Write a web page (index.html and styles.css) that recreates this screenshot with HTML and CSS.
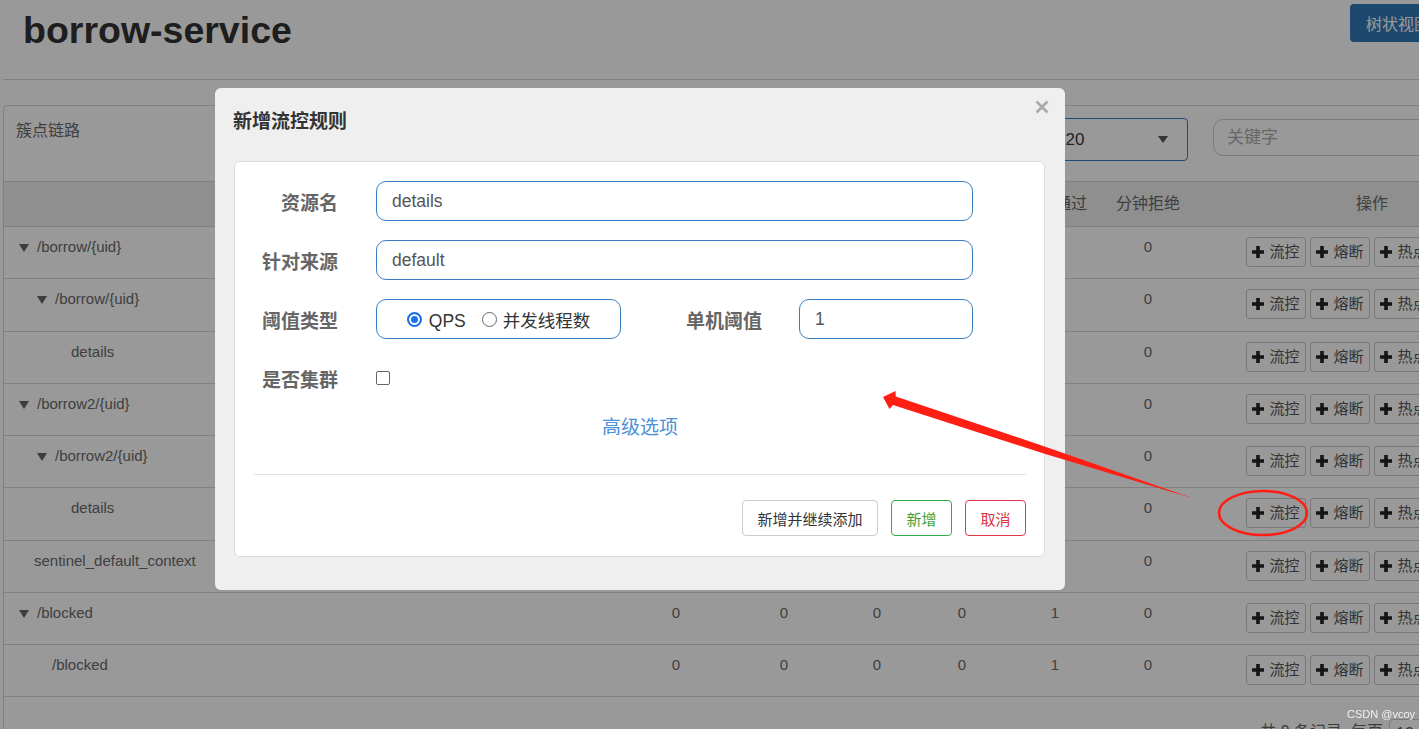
FILE: index.html
```html
<!DOCTYPE html>
<html lang="zh">
<head>
<meta charset="utf-8">
<title>borrow-service</title>
<link rel="stylesheet" href="styles.css">
</head>
<body>
<div class="page">
  <header class="page-head">
    <h1 class="page-title">borrow-service</h1>
    <button class="btn-tree">树状视图</button>
  </header>

  <section class="panel">
    <div class="panel-head">
      <span class="panel-title">簇点链路</span>
      <div class="tools">
        <div class="select"><span>720</span><i class="caret"></i></div>
        <input class="kw" type="text" placeholder="关键字">
        <button class="refresh">刷新</button>
      </div>
    </div>

    <table class="grid">
      <colgroup>
        <col class="w-res"><col class="w-a"><col class="w-a"><col class="w-b"><col class="w-c"><col class="w-d"><col class="w-c"><col class="w-ops">
      </colgroup>
      <thead>
        <tr><th>资源名</th><th>通过QPS</th><th>拒绝QPS</th><th>并发数</th><th>平均RT</th><th>分钟通过</th><th>分钟拒绝</th><th>操作</th></tr>
      </thead>
      <tbody>
        <tr>
          <td class="res p0"><i class="tri"></i>/borrow/{uid}</td>
          <td>0</td><td>0</td><td>0</td><td>0</td><td>1</td><td>0</td>
          <td class="ops"><div class="ops-btns"><button class="op"><svg class="plus" viewBox="0 0 12 12"><path d="M4.2 0h3.6v4.2H12v3.6H7.8V12H4.2V7.8H0V4.2h4.2z"/></svg>流控</button><button class="op"><svg class="plus" viewBox="0 0 12 12"><path d="M4.2 0h3.6v4.2H12v3.6H7.8V12H4.2V7.8H0V4.2h4.2z"/></svg>熔断</button><button class="op"><svg class="plus" viewBox="0 0 12 12"><path d="M4.2 0h3.6v4.2H12v3.6H7.8V12H4.2V7.8H0V4.2h4.2z"/></svg>热点</button><button class="op"><svg class="plus" viewBox="0 0 12 12"><path d="M4.2 0h3.6v4.2H12v3.6H7.8V12H4.2V7.8H0V4.2h4.2z"/></svg>授权</button></div></td>
        </tr>
        <tr>
          <td class="res p1"><i class="tri"></i>/borrow/{uid}</td>
          <td>0</td><td>0</td><td>0</td><td>0</td><td>1</td><td>0</td>
          <td class="ops"><div class="ops-btns"><button class="op"><svg class="plus" viewBox="0 0 12 12"><path d="M4.2 0h3.6v4.2H12v3.6H7.8V12H4.2V7.8H0V4.2h4.2z"/></svg>流控</button><button class="op"><svg class="plus" viewBox="0 0 12 12"><path d="M4.2 0h3.6v4.2H12v3.6H7.8V12H4.2V7.8H0V4.2h4.2z"/></svg>熔断</button><button class="op"><svg class="plus" viewBox="0 0 12 12"><path d="M4.2 0h3.6v4.2H12v3.6H7.8V12H4.2V7.8H0V4.2h4.2z"/></svg>热点</button><button class="op"><svg class="plus" viewBox="0 0 12 12"><path d="M4.2 0h3.6v4.2H12v3.6H7.8V12H4.2V7.8H0V4.2h4.2z"/></svg>授权</button></div></td>
        </tr>
        <tr>
          <td class="res leaf2">details</td>
          <td>0</td><td>0</td><td>0</td><td>0</td><td>1</td><td>0</td>
          <td class="ops"><div class="ops-btns"><button class="op"><svg class="plus" viewBox="0 0 12 12"><path d="M4.2 0h3.6v4.2H12v3.6H7.8V12H4.2V7.8H0V4.2h4.2z"/></svg>流控</button><button class="op"><svg class="plus" viewBox="0 0 12 12"><path d="M4.2 0h3.6v4.2H12v3.6H7.8V12H4.2V7.8H0V4.2h4.2z"/></svg>熔断</button><button class="op"><svg class="plus" viewBox="0 0 12 12"><path d="M4.2 0h3.6v4.2H12v3.6H7.8V12H4.2V7.8H0V4.2h4.2z"/></svg>热点</button><button class="op"><svg class="plus" viewBox="0 0 12 12"><path d="M4.2 0h3.6v4.2H12v3.6H7.8V12H4.2V7.8H0V4.2h4.2z"/></svg>授权</button></div></td>
        </tr>
        <tr>
          <td class="res p0"><i class="tri"></i>/borrow2/{uid}</td>
          <td>0</td><td>0</td><td>0</td><td>0</td><td>1</td><td>0</td>
          <td class="ops"><div class="ops-btns"><button class="op"><svg class="plus" viewBox="0 0 12 12"><path d="M4.2 0h3.6v4.2H12v3.6H7.8V12H4.2V7.8H0V4.2h4.2z"/></svg>流控</button><button class="op"><svg class="plus" viewBox="0 0 12 12"><path d="M4.2 0h3.6v4.2H12v3.6H7.8V12H4.2V7.8H0V4.2h4.2z"/></svg>熔断</button><button class="op"><svg class="plus" viewBox="0 0 12 12"><path d="M4.2 0h3.6v4.2H12v3.6H7.8V12H4.2V7.8H0V4.2h4.2z"/></svg>热点</button><button class="op"><svg class="plus" viewBox="0 0 12 12"><path d="M4.2 0h3.6v4.2H12v3.6H7.8V12H4.2V7.8H0V4.2h4.2z"/></svg>授权</button></div></td>
        </tr>
        <tr>
          <td class="res p1"><i class="tri"></i>/borrow2/{uid}</td>
          <td>0</td><td>0</td><td>0</td><td>0</td><td>1</td><td>0</td>
          <td class="ops"><div class="ops-btns"><button class="op"><svg class="plus" viewBox="0 0 12 12"><path d="M4.2 0h3.6v4.2H12v3.6H7.8V12H4.2V7.8H0V4.2h4.2z"/></svg>流控</button><button class="op"><svg class="plus" viewBox="0 0 12 12"><path d="M4.2 0h3.6v4.2H12v3.6H7.8V12H4.2V7.8H0V4.2h4.2z"/></svg>熔断</button><button class="op"><svg class="plus" viewBox="0 0 12 12"><path d="M4.2 0h3.6v4.2H12v3.6H7.8V12H4.2V7.8H0V4.2h4.2z"/></svg>热点</button><button class="op"><svg class="plus" viewBox="0 0 12 12"><path d="M4.2 0h3.6v4.2H12v3.6H7.8V12H4.2V7.8H0V4.2h4.2z"/></svg>授权</button></div></td>
        </tr>
        <tr>
          <td class="res leaf2">details</td>
          <td>0</td><td>0</td><td>0</td><td>0</td><td>1</td><td>0</td>
          <td class="ops"><div class="ops-btns"><button class="op"><svg class="plus" viewBox="0 0 12 12"><path d="M4.2 0h3.6v4.2H12v3.6H7.8V12H4.2V7.8H0V4.2h4.2z"/></svg>流控</button><button class="op"><svg class="plus" viewBox="0 0 12 12"><path d="M4.2 0h3.6v4.2H12v3.6H7.8V12H4.2V7.8H0V4.2h4.2z"/></svg>熔断</button><button class="op"><svg class="plus" viewBox="0 0 12 12"><path d="M4.2 0h3.6v4.2H12v3.6H7.8V12H4.2V7.8H0V4.2h4.2z"/></svg>热点</button><button class="op"><svg class="plus" viewBox="0 0 12 12"><path d="M4.2 0h3.6v4.2H12v3.6H7.8V12H4.2V7.8H0V4.2h4.2z"/></svg>授权</button></div></td>
        </tr>
        <tr>
          <td class="res leaf0">sentinel_default_context</td>
          <td>0</td><td>0</td><td>0</td><td>0</td><td>0</td><td>0</td>
          <td class="ops"><div class="ops-btns"><button class="op"><svg class="plus" viewBox="0 0 12 12"><path d="M4.2 0h3.6v4.2H12v3.6H7.8V12H4.2V7.8H0V4.2h4.2z"/></svg>流控</button><button class="op"><svg class="plus" viewBox="0 0 12 12"><path d="M4.2 0h3.6v4.2H12v3.6H7.8V12H4.2V7.8H0V4.2h4.2z"/></svg>熔断</button><button class="op"><svg class="plus" viewBox="0 0 12 12"><path d="M4.2 0h3.6v4.2H12v3.6H7.8V12H4.2V7.8H0V4.2h4.2z"/></svg>热点</button><button class="op"><svg class="plus" viewBox="0 0 12 12"><path d="M4.2 0h3.6v4.2H12v3.6H7.8V12H4.2V7.8H0V4.2h4.2z"/></svg>授权</button></div></td>
        </tr>
        <tr>
          <td class="res p0"><i class="tri"></i>/blocked</td>
          <td>0</td><td>0</td><td>0</td><td>0</td><td>1</td><td>0</td>
          <td class="ops"><div class="ops-btns"><button class="op"><svg class="plus" viewBox="0 0 12 12"><path d="M4.2 0h3.6v4.2H12v3.6H7.8V12H4.2V7.8H0V4.2h4.2z"/></svg>流控</button><button class="op"><svg class="plus" viewBox="0 0 12 12"><path d="M4.2 0h3.6v4.2H12v3.6H7.8V12H4.2V7.8H0V4.2h4.2z"/></svg>熔断</button><button class="op"><svg class="plus" viewBox="0 0 12 12"><path d="M4.2 0h3.6v4.2H12v3.6H7.8V12H4.2V7.8H0V4.2h4.2z"/></svg>热点</button><button class="op"><svg class="plus" viewBox="0 0 12 12"><path d="M4.2 0h3.6v4.2H12v3.6H7.8V12H4.2V7.8H0V4.2h4.2z"/></svg>授权</button></div></td>
        </tr>
        <tr>
          <td class="res leaf1">/blocked</td>
          <td>0</td><td>0</td><td>0</td><td>0</td><td>1</td><td>0</td>
          <td class="ops"><div class="ops-btns"><button class="op"><svg class="plus" viewBox="0 0 12 12"><path d="M4.2 0h3.6v4.2H12v3.6H7.8V12H4.2V7.8H0V4.2h4.2z"/></svg>流控</button><button class="op"><svg class="plus" viewBox="0 0 12 12"><path d="M4.2 0h3.6v4.2H12v3.6H7.8V12H4.2V7.8H0V4.2h4.2z"/></svg>熔断</button><button class="op"><svg class="plus" viewBox="0 0 12 12"><path d="M4.2 0h3.6v4.2H12v3.6H7.8V12H4.2V7.8H0V4.2h4.2z"/></svg>热点</button><button class="op"><svg class="plus" viewBox="0 0 12 12"><path d="M4.2 0h3.6v4.2H12v3.6H7.8V12H4.2V7.8H0V4.2h4.2z"/></svg>授权</button></div></td>
        </tr>
      </tbody>
    </table>

    <div class="pager">
      <span class="pager-text">共 9 条记录, 每页</span>
      <span class="pager-size">10</span>
    </div>
  </section>
</div>

<div class="mask"></div>

<div class="modal">
  <h4 class="modal-title">新增流控规则</h4>
  <button class="close" aria-label="关闭"><svg viewBox="0 0 14 14"><path d="M1.5 1.5L12.5 12.5M12.5 1.5L1.5 12.5"/></svg></button>
  <div class="card">
    <div class="frow">
      <label class="lbl">资源名</label>
      <input class="inp wide" type="text" value="details">
    </div>
    <div class="frow">
      <label class="lbl">针对来源</label>
      <input class="inp wide" type="text" value="default">
    </div>
    <div class="frow">
      <label class="lbl">阈值类型</label>
      <div class="radios">
        <span class="radio on"></span><span class="rtxt">QPS</span>
        <span class="radio off"></span><span class="rtxt">并发线程数</span>
      </div>
      <label class="lbl lbl2">单机阈值</label>
      <input class="inp small" type="text" value="1">
    </div>
    <div class="frow frow-last">
      <label class="lbl">是否集群</label>
      <span class="check"></span>
    </div>
    <div class="adv"><a class="adv-link">高级选项</a></div>
    <div class="divider"></div>
    <div class="actions">
      <button class="mbtn">新增并继续添加</button>
      <button class="mbtn green">新增</button>
      <button class="mbtn red">取消</button>
    </div>
  </div>
</div>

<svg class="annot" viewBox="0 0 1419 729" width="1419" height="729">
  <polygon class="arrow" points="883,397 895.5,391.1 895.8,396.4 1047.5,447.4 1193.5,498.6 1045.3,454 893,405 889.5,409.1"/>
  <ellipse class="ring" cx="1263" cy="513" rx="44" ry="22"/>
</svg>

<div class="watermark">CSDN @vcoy</div>
</body>
</html>
```

FILE: styles.css
```css
* { box-sizing: border-box; }

html, body {
  margin: 0;
  padding: 0;
  width: 1419px;
  height: 729px;
  overflow: hidden;
}

body {
  font-family: "Liberation Sans", "Noto Sans CJK SC", sans-serif;
  color: #333;
  background: #fff;
}

button { font-family: inherit; }

/* ---------- page underneath ---------- */
.page {
  width: 1560px;
  padding-left: 3px;
}

.page-head {
  height: 80px;
  border-bottom: 1px solid #d5d5d5;
  display: flex;
  align-items: flex-start;
}

.page-title {
  margin: 9px 0 0 20px;
  font-size: 37.5px;
  line-height: 42px;
  font-weight: bold;
  color: #333;
}

.btn-tree {
  margin: 4px 114px 0 auto;
  height: 38px;
  padding: 0 16px;
  border: 0;
  border-radius: 4px;
  background: #337ab7;
  color: #fff;
  font-size: 16px;
}

.panel {
  width: 1548px;
  margin-top: 25px;
  border: 1px solid #d5d5d5;
  border-radius: 4px;
  background: #fff;
}

.panel-head {
  height: 76px;
  border-bottom: 1px solid #d5d5d5;
  padding: 12px 12px 0 12px;
  display: flex;
  align-items: flex-start;
}

.panel-title {
  margin-top: 2px;
  font-size: 16px;
  line-height: 22px;
  color: #6a6a6a;
}

.tools {
  margin-left: auto;
  display: flex;
  align-items: flex-start;
  gap: 25px;
}

.select {
  width: 148px;
  height: 43px;
  border: 1px solid #3c7dc4;
  border-radius: 4px;
  padding: 0 19px 0 15px;
  display: flex;
  align-items: center;
  justify-content: space-between;
  font-size: 17px;
  color: #3a3a3a;
}

.caret {
  width: 0;
  height: 0;
  border-left: 5.5px solid transparent;
  border-right: 5.5px solid transparent;
  border-top: 7px solid #555;
}

.kw {
  width: 250px;
  height: 37px;
  margin-top: 1px;
  border: 1px solid #ccc;
  border-radius: 10px;
  padding: 0 13px;
  font-family: inherit;
  font-size: 17px;
  color: #555;
  outline: none;
}
.kw::placeholder { color: #ababab; }

.refresh {
  width: 60px;
  height: 37px;
  margin-left: -10px;
  margin-top: 1px;
  border: 1px solid #ccc;
  border-radius: 4px;
  background: #fff;
  font-size: 15px;
}

.grid {
  width: 1546px;
  table-layout: fixed;
  border-collapse: separate;
  border-spacing: 0;
}

.w-res { width: 618px; }
.w-a { width: 108px; }
.w-b { width: 78px; }
.w-c { width: 92px; }
.w-d { width: 94px; }
.w-ops { width: 356px; }

.grid th {
  height: 45px;
  padding: 11px 0;
  background: #eee;
  border-bottom: 1px solid #d5d5d5;
  font-size: 16px;
  line-height: 22px;
  font-weight: normal;
  color: #6a6a6a;
  text-align: center;
  vertical-align: top;
}

.grid td {
  height: 52.25px;
  padding: 10px 0 0;
  border-bottom: 1px solid #d5d5d5;
  font-size: 15px;
  line-height: 20px;
  color: #6a6a6a;
  text-align: center;
  vertical-align: top;
}

.grid td.res { text-align: left; white-space: nowrap; }
.grid td.p0 { padding-left: 15px; }
.grid td.p1 { padding-left: 33px; }
.grid td.leaf0 { padding-left: 30px; }
.grid td.leaf1 { padding-left: 48px; }
.grid td.leaf2 { padding-left: 67px; }

.tri {
  display: inline-block;
  width: 0;
  height: 0;
  margin-right: 8px;
  border-left: 5.5px solid transparent;
  border-right: 5.5px solid transparent;
  border-top: 8px solid #666;
  vertical-align: middle;
}

.ops-btns {
  display: flex;
  justify-content: center;
  gap: 4px;
}

.op {
  width: 60px;
  height: 30px;
  padding: 0;
  border: 1px solid #c8c8c8;
  border-radius: 3px;
  background: #fff;
  display: flex;
  align-items: center;
  justify-content: center;
  gap: 5px;
  font-size: 15px;
  line-height: 20px;
  color: #555;
}

.plus {
  width: 12px;
  height: 12px;
  fill: #222;
  flex: none;
}

.pager {
  display: flex;
  justify-content: flex-end;
  align-items: flex-start;
  padding: 22px 101px 20px 0;
}

.pager-text {
  margin-top: 2px;
  font-size: 16px;
  line-height: 22px;
  color: #6a6a6a;
}

.pager-size {
  margin-left: 6px;
  width: 60px;
  height: 34px;
  border: 1px solid #ccc;
  border-radius: 4px;
  padding: 5px 6px;
  font-size: 16px;
  color: #555;
}

/* ---------- dim mask ---------- */
.mask {
  position: fixed;
  inset: 0;
  background: rgba(0, 0, 0, 0.4);
  z-index: 10;
}

/* ---------- modal ---------- */
.modal {
  position: fixed;
  left: 215px;
  top: 88px;
  width: 850px;
  padding: 20px 20px 33px 19px;
  background: #efefef;
  border-radius: 6px;
  z-index: 20;
}

.modal-title {
  margin: 0 0 26px -1px;
  font-size: 19px;
  line-height: 27px;
  font-weight: bold;
  color: #333;
}

.close {
  position: absolute;
  top: 12px;
  right: 16px;
  width: 14px;
  height: 14px;
  padding: 0;
  border: 0;
  background: none;
}
.close svg {
  display: block;
  width: 14px;
  height: 14px;
  stroke: #aaa;
  stroke-width: 2.6;
  fill: none;
}

.card {
  background: #fff;
  border: 1px solid #ddd;
  border-radius: 6px;
  padding: 19px 18px 20px 19px;
}

.frow {
  display: flex;
  align-items: center;
  height: 40px;
  margin-bottom: 19px;
}
.frow.frow-last { margin-bottom: 0; }

.lbl {
  width: 84px;
  flex: none;
  margin-right: 38px;
  padding-top: 5px;
  text-align: right;
  font-size: 19px;
  line-height: 27px;
  font-weight: bold;
  color: #666;
  white-space: nowrap;
}

.lbl2 {
  width: 141px;
  margin-right: 37px;
}

.inp {
  height: 40px;
  border: 1px solid #3b7bbf;
  border-radius: 10px;
  padding: 0 15px;
  font-family: inherit;
  font-size: 17.5px;
  color: #555;
  background: #fff;
  outline: none;
}
.inp.wide { width: 597px; }
.inp.small { width: 174px; }

.radios {
  width: 245px;
  height: 40px;
  flex: none;
  border: 1px solid #3b7bbf;
  border-radius: 10px;
  display: flex;
  align-items: center;
  justify-content: center;
}

.radio {
  width: 15px;
  height: 15px;
  border-radius: 50%;
  flex: none;
}
.radio.on {
  border: 2px solid #1a73e8;
  background: #1a73e8;
  box-shadow: inset 0 0 0 2px #fff;
  margin-right: 7px;
}
.radio.off {
  border: 1px solid #666;
  background: #fff;
  margin-left: 16px;
  margin-right: 6px;
}

.rtxt {
  font-size: 17.5px;
  line-height: 24px;
  padding-top: 3px;
  color: #333;
}

.check {
  width: 14px;
  height: 14px;
  border: 1px solid #666;
  border-radius: 2px;
  background: #fff;
}

.adv {
  margin-top: 16px;
  text-align: center;
  font-size: 19px;
  line-height: 27px;
}
.adv-link { color: #4a90d9; }

.divider {
  margin-top: 33px;
  border-top: 1px solid #e2e2e2;
}

.actions {
  margin-top: 25px;
  display: flex;
  justify-content: flex-end;
  gap: 13px;
}

.mbtn {
  height: 36px;
  padding: 0 14.5px;
  border: 1px solid #ccc;
  border-radius: 4px;
  background: #fff;
  font-size: 15px;
  color: #333;
}
.mbtn.green { border-color: #2fae4e; color: #3f9d3a; }
.mbtn.red { border-color: #e2394a; color: #dc3545; }

/* ---------- annotations ---------- */
.annot {
  position: fixed;
  left: 0;
  top: 0;
  z-index: 30;
  pointer-events: none;
}
.arrow { fill: #ff1e14; }
.ring { fill: none; stroke: #ff1e14; stroke-width: 2.6; }

.watermark {
  position: fixed;
  left: 1347px;
  top: 707px;
  z-index: 40;
  font-size: 11px;
  line-height: 14px;
  color: rgba(255, 255, 255, 0.85);
}
```
